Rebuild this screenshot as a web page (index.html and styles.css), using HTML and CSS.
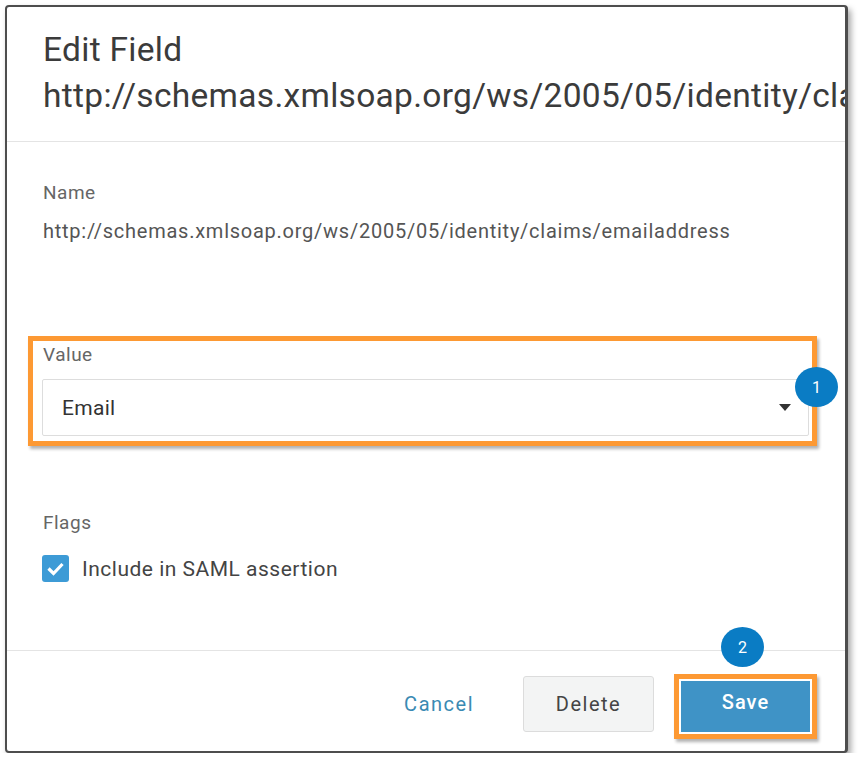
FILE: index.html
```html
<!DOCTYPE html>
<html lang="en">
<head>
  <meta charset="UTF-8">
  <title>Edit Field</title>
  <link rel="stylesheet" href="styles.css">
</head>
<body>
  <div class="dialog">

    <div class="dialog-header">
      <h1>Edit Field<br>http://schemas.xmlsoap.org/ws/2005/05/identity/claims/emailaddress</h1>
    </div>

    <div class="dialog-body">
      <div class="label">Name</div>
      <div class="field-text">http://schemas.xmlsoap.org/ws/2005/05/identity/claims/emailaddress</div>

      <div class="highlight value-group">
        <div class="label">Value</div>
        <div class="select">
          <span>Email</span>
          <span class="caret"></span>
        </div>
        <span class="step">1</span>
      </div>

      <div class="label flags-label">Flags</div>
      <label class="check-row">
        <span class="checkbox">
          <svg width="19" height="19" viewBox="0 0 19 19"><path d="M2.5 9.5 L7.5 14.5 L16.5 5" fill="none" stroke="#fff" stroke-width="3.2"/></svg>
        </span>
        Include in SAML assertion
      </label>
    </div>

    <div class="dialog-footer">
      <button class="btn-link">Cancel</button>
      <button class="btn-default">Delete</button>
      <div class="highlight save-wrap">
        <button class="btn-primary">Save</button>
        <span class="step">2</span>
      </div>
    </div>

  </div>
</body>
</html>
```

FILE: styles.css
```css
body {
  margin: 0;
  background: #fff;
  font-family: Roboto, 'Liberation Sans', sans-serif;
}

.dialog {
  margin: 5px 0 0 5px;
  width: 838px;
  height: 744px;
  border: 2px solid #4d4d4d;
  border-right-width: 3px;
  border-radius: 4px;
  background: #fff;
  box-shadow: 3px 4px 6px rgba(0,0,0,0.35);
  display: flex;
  flex-direction: column;
  overflow: hidden;
}

.dialog-header {
  padding: 20px 0 22px 36px;
  border-bottom: 1px solid #e4e4e4;
  white-space: nowrap;
}

h1 {
  margin: 0;
  font-size: 33.5px;
  line-height: 46px;
  font-weight: 400;
  color: #3b3b3b;
  letter-spacing: 0.3px;
}

.dialog-body {
  flex: 1;
  padding: 39px 36px 0 36px;
}

.label {
  font-size: 19px;
  line-height: 24px;
  color: #666;
  letter-spacing: 0.5px;
}

.field-text {
  margin-top: 14px;
  font-size: 20px;
  line-height: 24px;
  color: #555;
  letter-spacing: 0.75px;
}

.highlight {
  position: relative;
  border: 5px solid #fd9933;
  box-shadow: 2px 3px 3px rgba(0,0,0,0.3);
}

.value-group {
  margin: 93px 0 0 -15px;
  width: 767px;
  padding: 2px 3px 5px 9px;
}

.value-group .label {
  padding-left: 1px;
}

.select {
  margin-top: 12px;
  height: 55px;
  border: 1px solid #ddd;
  border-radius: 2px;
  display: flex;
  align-items: center;
  justify-content: space-between;
  padding: 0 17px 0 19px;
  font-size: 21px;
  color: #333;
  letter-spacing: 0.3px;
}

.caret {
  width: 0;
  height: 0;
  border-left: 6.5px solid transparent;
  border-right: 6.5px solid transparent;
  border-top: 7px solid #333;
}

.step {
  position: absolute;
  width: 43px;
  height: 40px;
  border-radius: 50%;
  background: #0a7cc4;
  color: #fff;
  font-size: 16px;
  display: flex;
  align-items: center;
  justify-content: center;
}

.value-group .step {
  right: -26px;
  top: 26px;
}

.flags-label {
  margin-top: 65px;
}

.check-row {
  margin-top: 20px;
  display: flex;
  align-items: center;
  gap: 13px;
  font-size: 21px;
  color: #444;
  letter-spacing: 0.5px;
}

.checkbox {
  margin-left: -1px;
  width: 27px;
  height: 27px;
  border-radius: 3px;
  background: #3d9bd6;
  display: flex;
  align-items: center;
  justify-content: center;
}

.dialog-footer {
  border-top: 1px solid #e4e4e4;
  height: 101px;
  display: flex;
  justify-content: flex-end;
  align-items: flex-start;
  padding: 23px 28px 0 0;
  box-sizing: border-box;
}

button {
  font-family: Roboto, 'Liberation Sans', sans-serif;
  font-size: 20px;
  letter-spacing: 1.5px;
  cursor: pointer;
}

.btn-link {
  margin-top: 18px;
  margin-right: 49px;
  padding: 0;
  background: none;
  border: none;
  color: #3a8ab3;
}

.btn-default {
  margin-top: 2px;
  width: 131px;
  height: 56px;
  background: #f3f4f4;
  border: 1px solid #dcdcdc;
  border-radius: 3px;
  color: #444;
}

.save-wrap {
  margin-left: 20px;
  padding: 2px;
}

.btn-primary {
  display: block;
  width: 129px;
  height: 51px;
  background: #3f93c6;
  border: none;
  color: #fff;
  font-weight: 500;
  letter-spacing: 1px;
  padding-bottom: 10px;
}

.save-wrap .step {
  left: 42px;
  top: -52px;
}
```
